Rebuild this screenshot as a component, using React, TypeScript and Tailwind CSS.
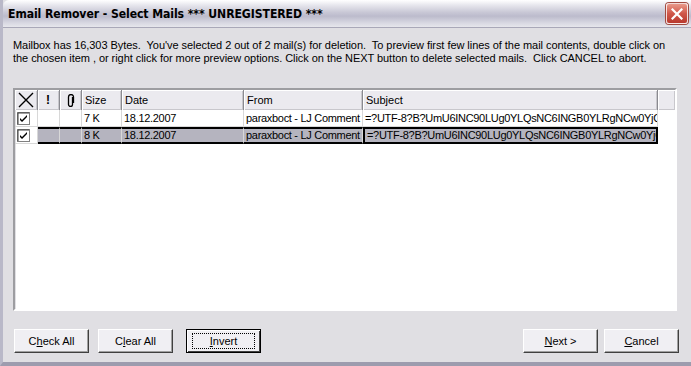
import React from 'react';

// --- column layout of the mail list ---
const cols = [
  { key: 'chk', w: 23 },
  { key: 'pri', w: 22 },
  { key: 'att', w: 22 },
  { key: 'size', w: 40, label: 'Size' },
  { key: 'date', w: 122, label: 'Date' },
  { key: 'from', w: 119, label: 'From' },
  { key: 'subj', w: 295, label: 'Subject' },
];

const mails = [
  { size: '7 K', date: '18.12.2007', from: 'paraxboct - LJ Comment', subj: '=?UTF-8?B?UmU6INC90LUg0YLQsNC6INGB0YLRgNCw0YjQvdC+' },
  { size: '8 K', date: '18.12.2007', from: 'paraxboct - LJ Comment', subj: '=?UTF-8?B?UmU6INC90LUg0YLQsNC6INGB0YLRgNCw0YjQvdC+' },
];

const CheckBox = () => (
  <svg width="13" height="13" viewBox="0 0 13 13">
    <rect x="0.5" y="0.5" width="12" height="12" fill="#fff" stroke="#808080" />
    <path d="M1 12V1h11" fill="none" stroke="#404040" />
    <path d="M3 6l2 2 5-5v2l-5 5-2-2z" fill="#000" />
  </svg>
);

const CloseBtn = () => (
  <div className="w-[22px] h-[21px] rounded-[3px] border border-white/80 bg-gradient-to-b from-[#e8998a] via-[#d0574a] to-[#b8392e] flex items-center justify-center shadow-[0_0_0_1px_#a04a40]">
    <svg width="12" height="12" viewBox="0 0 12 12">
      <path d="M1.5 1.5l9 9M10.5 1.5l-9 9" stroke="#fff" strokeWidth="2.2" strokeLinecap="square" />
    </svg>
  </div>
);

const Btn = ({ children, def }: { children: React.ReactNode; def?: boolean }) => (
  <button
    className={
      'w-[75px] h-[24px] bg-[#f0eff3] text-[11px] text-black flex items-center justify-center ' +
      (def
        ? 'border border-black shadow-[inset_1px_1px_0_#fff,inset_-1px_-1px_0_#404040]'
        : 'border border-[#fff] border-r-[#404040] border-b-[#404040] shadow-[inset_-1px_-1px_0_#a0a0a0]')
    }
  >
    {def ? (
      <span className="border border-dotted border-black px-[12px] py-[1px] w-[63px] h-[16px] flex items-center justify-center">{children}</span>
    ) : (
      children
    )}
  </button>
);

function App() {
  return (
    <div className="w-[691px] h-[366px] bg-[#e0dfe3] flex flex-col overflow-hidden font-['Liberation_Sans',sans-serif] border-l-[3px] border-b-[4px] border-l-[#b9b8c8] border-b-[#9d9cae]">
      {/* title bar */}
      <div className="h-[28px] shrink-0 flex items-center justify-between pl-[5px] pr-[3px] border-b border-[#a9a8b8] bg-[linear-gradient(to_bottom,#ffffff_0%,#e8e8ee_18%,#c9c8d6_45%,#bcbbcc_60%,#d8d8e2_85%,#e6e6ec_100%)] rounded-tl-[6px]">
        <span className="text-[13px] font-bold text-black tracking-[-0.1px] font-['DejaVu_Sans',sans-serif] scale-x-[0.84] origin-left whitespace-nowrap">
          Email Remover - Select Mails *** UNREGISTERED ***
        </span>
        <CloseBtn />
      </div>

      {/* body */}
      <div className="flex-1 flex flex-col px-[10px] pt-[11px]">
        <p className="text-[11px] leading-[13px] text-black tracking-[-0.05px] whitespace-nowrap">
          Mailbox has 16,303 Bytes.&nbsp; You've selected 2 out of 2 mail(s) for deletion.&nbsp; To preview first few lines of the mail contents, double click on
          <br />
          the chosen item , or right click for more preview options. Click on the NEXT button to delete selected mails.&nbsp; Click CANCEL to abort.
        </p>

        {/* list view */}
        <div className="mt-[23px] h-[223px] w-[664px] bg-white border-2 border-t-[#9d9da1] border-l-[#9d9da1] border-r-white border-b-white shadow-[inset_1px_1px_0_#e0dfe3] overflow-hidden">
          <div className="flex h-[20px] bg-[#ebeaef] text-[11px] text-black">
            {cols.map((c) => (
              <div
                key={c.key}
                style={{ width: c.w }}
                className="shrink-0 h-full flex items-center border-r border-r-[#8a8a90] shadow-[inset_1px_1px_0_#fff,inset_-1px_-1px_0_#c8c7cc] pl-[3px]"
              >
                {c.key === 'chk' && (
                  <svg width="16" height="16" viewBox="0 0 16 16">
                    <path d="M1 1l14 14M15 1L1 15" stroke="#000" strokeWidth="1.4" />
                  </svg>
                )}
                {c.key === 'pri' && <span className="ml-[5px] font-bold text-[12px]">!</span>}
                {c.key === 'att' && (
                  <svg width="8" height="13" viewBox="0 0 8 13" className="ml-[4px]">
                    <path d="M5.5 3v7.5a2 2 0 0 1-4 0V3a2.5 2.5 0 0 1 5 0v6" fill="none" stroke="#000" strokeWidth="1.3" />
                  </svg>
                )}
                {c.label && <span>{c.label}</span>}
              </div>
            ))}
            <div className="flex-1 h-full shadow-[inset_1px_1px_0_#fff,inset_-1px_-1px_0_#c8c7cc]" />
          </div>

          {mails.map((m, i) => {
            const sel = i === 1;
            return (
              <div key={i} className="flex h-[17px] text-[11px] text-black tracking-[-0.3px]">
                <div className="w-[23px] shrink-0 border-r border-b border-[#d8d8d8] flex items-center pl-[2px]">
                  <CheckBox />
                </div>
                {[
                  { w: 22, t: '' },
                  { w: 22, t: '' },
                  { w: 40, t: m.size },
                  { w: 122, t: m.date },
                  { w: 119, t: m.from },
                ].map((c, j) => (
                  <div
                    key={j}
                    style={{ width: c.w }}
                    className={
                      'shrink-0 flex items-center pl-[2px] whitespace-nowrap overflow-hidden border-r ' +
                      (sel ? 'bg-[#b5b4bf] border-y-2 border-y-black border-r-[#d8d8d8]' : 'border-b border-[#d8d8d8]')
                    }
                  >
                    {c.t}
                  </div>
                ))}
                <div
                  className={
                    'w-[295px] shrink-0 flex items-center pl-[2px] whitespace-nowrap overflow-hidden ' +
                    (sel ? 'bg-[#b5b4bf] border-2 border-black' : 'border-b border-r border-[#d8d8d8]')
                  }
                >
                  {m.subj}
                </div>
              </div>
            );
          })}
        </div>

        {/* buttons */}
        <div className="flex items-center mt-[18px] pl-[1px]">
          <Btn>
            C<span className="underline">h</span>eck All
          </Btn>
          <div className="w-[9px]" />
          <Btn>
            C<span className="underline">l</span>ear All
          </Btn>
          <div className="w-[13px]" />
          <Btn def>
            <span className="underline">I</span>nvert
          </Btn>
          <div className="flex-1" />
          <Btn>
            <span className="underline">N</span>ext &gt;
          </Btn>
          <div className="w-[6px]" />
          <Btn>
            <span className="underline">C</span>ancel
          </Btn>
          <div className="w-[2px]" />
        </div>
      </div>
    </div>
  );
}

export default App;
